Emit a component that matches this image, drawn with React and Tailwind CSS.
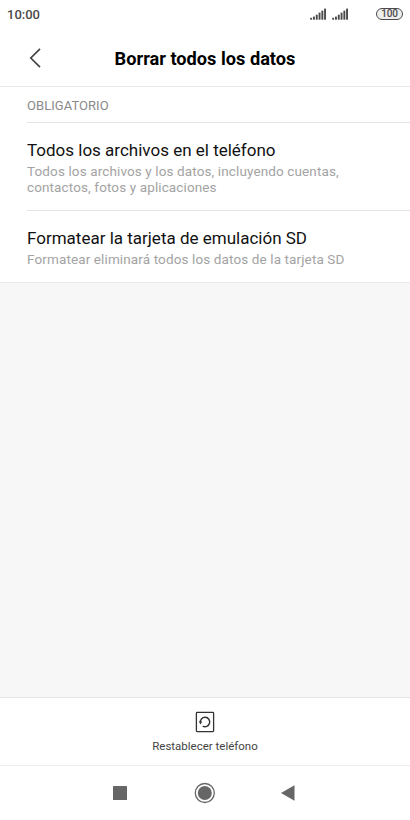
import React from 'react';

const Signal = () => (
    <svg width="17" height="12" viewBox="0 0 17 12" fill="#4a4a4a">
        <rect x="0.2" y="9.8" width="1.9" height="1.9" />
        <rect x="3" y="8.6" width="1.9" height="3.1" />
        <rect x="5.8" y="6.7" width="1.9" height="5" />
        <rect x="8.6" y="4.6" width="1.9" height="7.1" />
        <rect x="11.4" y="2.6" width="1.9" height="9.1" />
        <rect x="14.1" y="0.6" width="1.9" height="11.1" />
    </svg>
);

const items = [
    {
        title: 'Todos los archivos en el teléfono',
        text: 'Todos los archivos y los datos, incluyendo cuentas, contactos, fotos y aplicaciones',
    },
    {
        title: 'Formatear la tarjeta de emulación SD',
        text: 'Formatear eliminará todos los datos de la tarjeta SD',
    },
];

const App = () => {
    return (
        <div className="flex h-[820px] w-[410px] flex-col overflow-hidden bg-[#f7f7f7] font-['Roboto',sans-serif]">
            {/* Status bar */}
            <div className="flex h-[30px] items-center bg-white px-[7px] pb-[2px]">
                <span className="pt-px text-[13px] leading-none font-medium text-[#4a4a4a]">10:00</span>
                <div className="ml-auto flex items-center">
                    <div className="mr-[27px] flex gap-[5px]">
                        <Signal />
                        <Signal />
                    </div>
                    <div className="flex h-3 w-[27px] items-center justify-center rounded-full border-[1.5px] border-[#4a4a4a] bg-[#eeeeee] text-[10px] leading-none font-medium tracking-[-0.2px] text-[#4a4a4a]">
                        100
                    </div>
                </div>
            </div>

            {/* Header */}
            <div className="grid h-[57px] grid-cols-[60px_1fr_60px] items-center border-b border-[#e9e9e9] bg-white">
                <button className="pl-[29px]">
                    <svg width="13" height="22" viewBox="0 0 13 22" fill="none" stroke="#444444" strokeWidth="1.7">
                        <path d="M11 1.8 1.8 11l9.2 9.2" />
                    </svg>
                </button>
                <h1 className="pt-[2px] text-center text-[18.2px] leading-none font-bold whitespace-nowrap text-black">
                    Borrar todos los datos
                </h1>
            </div>

            {/* Options */}
            <div className="border-b border-[#e9e9e9] bg-white pl-[27px]">
                <div className="flex h-[35px] items-center pt-[2px] text-[13px] leading-none tracking-[0.05px] text-[#8a8a8a]">
                    OBLIGATORIO
                </div>
                {items.map((item) => (
                    <div key={item.title} className="border-t border-[#e5e5e5] pt-4 pb-[15px]">
                        <h2 className="text-[17px] leading-[22px] text-[#111111]">{item.title}</h2>
                        <p className="w-[330px] pt-[2px] text-[13.5px] leading-4 tracking-[0.12px] text-[#a3a3a3]">{item.text}</p>
                    </div>
                ))}
            </div>

            {/* Reset action */}
            <div className="mt-auto flex h-[68px] flex-col items-center border-t border-[#e5e5e5] bg-white pt-[13px]">
                <svg width="20" height="22" viewBox="0 0 20 22" fill="none" stroke="#333333">
                    <rect x="1.4" y="1.4" width="17.2" height="19.2" rx="0.8" strokeWidth="1.3" />
                    <path d="M7.7 15.1A4.7 4.7 0 1 0 5.4 11.9" strokeWidth="1.4" />
                    <path d="M3.9 10.6h3.3l-1.6 2.9z" fill="#333333" stroke="none" />
                </svg>
                <span className="mt-[6px] text-[11.5px] leading-[14px] text-[#444444]">Restablecer teléfono</span>
            </div>

            {/* Navigation bar */}
            <div className="flex h-[55px] items-center border-t border-[#eeeeee] bg-white pl-[113px]">
                <svg width="14" height="14" viewBox="0 0 14 14">
                    <rect width="14" height="14" rx="0.6" fill="#666666" />
                </svg>
                <svg className="ml-[67px]" width="22" height="22" viewBox="0 0 22 22">
                    <circle cx="10.8" cy="11" r="9.5" fill="none" stroke="#666666" strokeWidth="1.3" />
                    <circle cx="10.8" cy="11" r="7" fill="#666666" />
                </svg>
                <svg className="ml-[65px]" width="14" height="16" viewBox="0 0 14 16">
                    <path d="M0 8 13.5.3v15.4z" fill="#666666" />
                </svg>
            </div>
        </div>
    );
};

export default App;
